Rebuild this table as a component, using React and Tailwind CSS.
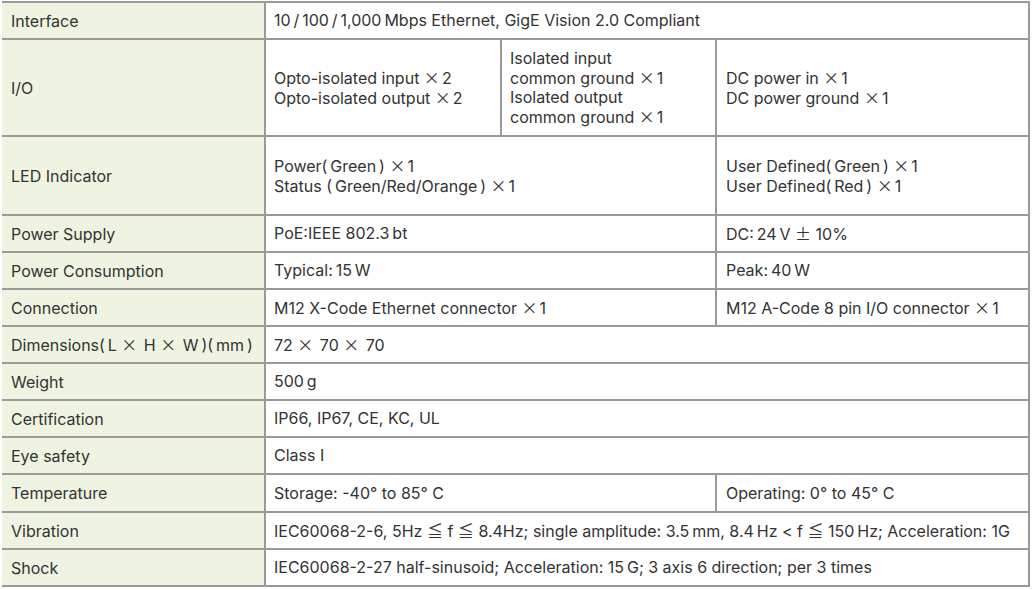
import React from "react";

const CJK = { fontFamily: '"Noto Sans CJK JP", sans-serif' };
const X = () => <span style={CJK} className="inline-block mr-[2px]">×</span>;
const T = "\u2009";

const L = ({ children }) => (
  <td className="bg-[#eef3e2] border-2 border-[#9a9a9a] border-l-0 pl-[9px] pr-1 align-middle whitespace-nowrap">{children}</td>
);
const C = ({ children, span = 1, pl = "pl-[8px]" }) => (
  <td colSpan={span} className={`border-2 border-[#9a9a9a] ${pl} pr-1 align-middle leading-[19px] whitespace-nowrap`}>{children}</td>
);

export default function App() {
  return (
    <div className="w-[1032px] h-[590px] bg-white pt-[1px] pl-[2px] overflow-hidden" style={{ fontFamily: 'Inter, "Noto Sans", sans-serif' }}>
      <table className="border-collapse table-fixed w-[1027px] text-[16px] text-[#333]">
        <colgroup>
          <col className="w-[263px]" />
          <col className="w-[236px]" />
          <col className="w-[215px]" />
          <col className="w-[313px]" />
        </colgroup>
        <tbody>
          <tr className="h-[37px]">
            <L>Interface</L>
            <C span={3}>10{T}/{T}100{T}/{T}1,000{T}Mbps Ethernet, GigE Vision 2.0 Compliant</C>
          </tr>
          <tr className="h-[97px]">
            <L>I/O</L>
            <C>Opto-isolated input <X />2<br />Opto-isolated output <X />2</C>
            <C>Isolated input<br />common ground <X />1<br />Isolated output<br />common ground <X />1</C>
            <C pl="pl-[9px]">DC power in <X />1<br />DC power ground <X />1</C>
          </tr>
          <tr className="h-[79px]">
            <L>LED Indicator</L>
            <C span={2}>Power({T}Green{T}) <X />1<br />Status ({T}Green/Red/Orange{T}) <X />1</C>
            <C pl="pl-[9px]">User Defined({T}Green{T}) <X />1<br />User Defined({T}Red{T}) <X />1</C>
          </tr>
          <tr className="h-[37px]">
            <L>Power Supply</L>
            <C span={2}>PoE:IEEE 802.3{T}bt</C>
            <C pl="pl-[9px]">DC:{T}24{T}V <span style={CJK}>±</span> 10%</C>
          </tr>
          <tr className="h-[37px]">
            <L>Power Consumption</L>
            <C span={2}>Typical:{T}15{T}W</C>
            <C pl="pl-[9px]">Peak:{T}40{T}W</C>
          </tr>
          <tr className="h-[37px]">
            <L>Connection</L>
            <C span={2}>M12 X-Code Ethernet connector <X />1</C>
            <C pl="pl-[9px]">M12 A-Code 8 pin I/O connector <X />1</C>
          </tr>
          <tr className="h-[37px]">
            <L>Dimensions({T}L <X /> H <X /> W{T})({T}mm{T})</L>
            <C span={3}>72 <X /> 70 <X /> 70</C>
          </tr>
          <tr className="h-[37px]">
            <L>Weight</L>
            <C span={3}>500{T}g</C>
          </tr>
          <tr className="h-[37px]">
            <L>Certification</L>
            <C span={3}>IP66, IP67, CE, KC, UL</C>
          </tr>
          <tr className="h-[37px]">
            <L>Eye safety</L>
            <C span={3}>Class I</C>
          </tr>
          <tr className="h-[38px]">
            <L>Temperature</L>
            <C span={2}>Storage: -40° to 85° C</C>
            <C pl="pl-[9px]">Operating: 0° to 45° C</C>
          </tr>
          <tr className="h-[37px]">
            <L>Vibration</L>
            <C span={3}>IEC60068-2-6, 5Hz <span style={CJK}>≦</span> f <span style={CJK}>≦</span> 8.4Hz; single amplitude: 3.5{T}mm, 8.4{T}Hz &lt; f <span style={CJK}>≦</span> 150{T}Hz; Acceleration: 1G</C>
          </tr>
          <tr className="h-[37px]">
            <L>Shock</L>
            <C span={3}>IEC60068-2-27 half-sinusoid; Acceleration: 15{T}G; 3 axis 6 direction; per 3 times</C>
          </tr>
        </tbody>
      </table>
    </div>
  );
}
